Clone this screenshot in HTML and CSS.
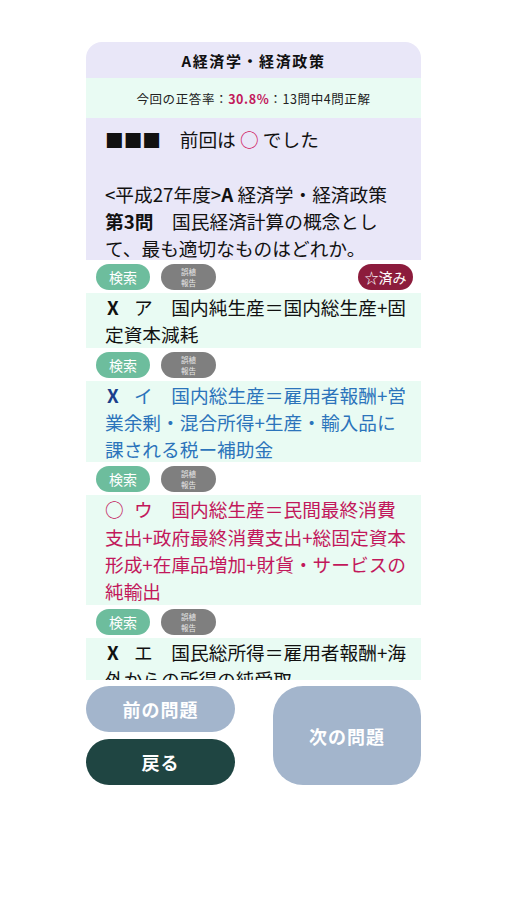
FILE: index.html
```html
<!DOCTYPE html>
<html lang="ja">
<head>
<meta charset="utf-8">
<title>A経済学・経済政策</title>
<link rel="stylesheet" href="styles.css">
</head>
<body>
<div class="page">
  <div class="card">
    <div class="title">A経済学・経済政策</div>
    <div class="stat">今回の正答率：<span class="rate">30.8%</span>：13問中4問正解</div>
    <div class="question">■■■　前回は <span class="ok">○</span> でした<br><br>&lt;平成27年度&gt;<b>A</b> 経済学・経済政策<br><b>第3問</b>　国民経済計算の概念として、最も適切なものはどれか。</div>

    <div class="tools">
      <span class="pill search">検索</span>
      <span class="pill report">誤植<br>報告</span>
      <span class="spacer"></span>
      <span class="pill done">☆済み</span>
    </div>
    <div class="option"><span class="mark">X</span>ア　国内純生産＝国内総生産+固定資本減耗</div>

    <div class="tools">
      <span class="pill search">検索</span>
      <span class="pill report">誤植<br>報告</span>
    </div>
    <div class="option blue"><span class="mark">X</span>イ　国内総生産＝雇用者報酬+営業余剰・混合所得+生産・輸入品に課される税ー補助金</div>

    <div class="tools">
      <span class="pill search">検索</span>
      <span class="pill report">誤植<br>報告</span>
    </div>
    <div class="option red"><span class="mark circle">○</span>ウ　国内総生産＝民間最終消費支出+政府最終消費支出+総固定資本形成+在庫品増加+財貨・サービスの純輸出</div>

    <div class="tools">
      <span class="pill search">検索</span>
      <span class="pill report">誤植<br>報告</span>
    </div>
    <div class="option"><span class="mark">X</span>エ　国民総所得＝雇用者報酬+海外からの所得の純受取</div>
  </div>

  <div class="nav">
    <div class="nav-left">
      <div class="btn prev">前の問題</div>
      <div class="btn back">戻る</div>
    </div>
    <div class="btn next">次の問題</div>
  </div>
</div>
</body>
</html>
```

FILE: styles.css
```css
html, body {
  margin: 0;
  padding: 0;
  background: #ffffff;
}

body {
  font-family: "Noto Sans CJK JP", "Noto Sans", sans-serif;
  color: #111111;
}

.page {
  width: 335px;
  margin: 42px auto 0;
}

.card {
  height: 638px;
  overflow: hidden;
  border-radius: 16px 16px 0 0;
  background: #ffffff;
}

.title {
  height: 36px;
  background: #e9e7f8;
  display: flex;
  align-items: center;
  justify-content: center;
  font-size: 15px;
  font-weight: bold;
  letter-spacing: 1.6px;
}

.stat {
  height: 40px;
  background: #e9fbf3;
  display: flex;
  align-items: center;
  justify-content: center;
  font-size: 12.5px;
  letter-spacing: 0.6px;
  color: #222;
}

.rate {
  color: #c2185b;
  font-weight: bold;
}

.question {
  background: #e9e7f8;
  padding: 7px 12px 0 19px;
  font-size: 18.7px;
  line-height: 27.3px;
  height: 135px;
}

.question b {
  font-weight: bold;
}

.ok {
  color: #d0175e;
}

.tools {
  display: flex;
  align-items: center;
  gap: 11px;
  padding: 4px 8px 3px 10px;
}

.spacer {
  flex: 1;
}

.pill {
  height: 26px;
  border-radius: 13px;
  display: flex;
  align-items: center;
  justify-content: center;
  color: #ffffff;
  box-sizing: border-box;
}

.search {
  width: 54px;
  background: #6dbd9d;
  font-size: 14px;
}

.report {
  width: 55px;
  background: #7f7f7f;
  font-size: 7.5px;
  line-height: 11px;
  text-align: center;
  color: #e6e6e6;
}

.done {
  width: 55px;
  background: #8c1c3c;
  font-size: 14px;
}

.option {
  background: #e9fbf3;
  padding: 0 12px 0 19px;
  font-size: 18.7px;
  line-height: 27.3px;
}

.mark {
  display: inline-block;
  width: 29px;
  padding-left: 2px;
  box-sizing: border-box;
  font-weight: bold;
}

.circle {
  font-weight: normal;
  padding-left: 0;
}

.blue {
  color: #2c74bb;
}

.blue .mark {
  color: #1b3f8c;
}

.red {
  color: #c2185b;
}

.nav {
  display: flex;
  justify-content: space-between;
  margin-top: 6px;
}

.nav-left {
  width: 149px;
  display: flex;
  flex-direction: column;
  gap: 7px;
}

.btn {
  display: flex;
  align-items: center;
  justify-content: center;
  color: #ffffff;
  font-size: 18px;
  font-weight: bold;
  letter-spacing: 1px;
}

.prev {
  height: 46px;
  border-radius: 23px;
  background: #a3b5cc;
}

.back {
  height: 46px;
  border-radius: 23px;
  background: #1f4542;
}

.next {
  width: 148px;
  height: 99px;
  border-radius: 30px;
  background: #a3b5cc;
}
```
